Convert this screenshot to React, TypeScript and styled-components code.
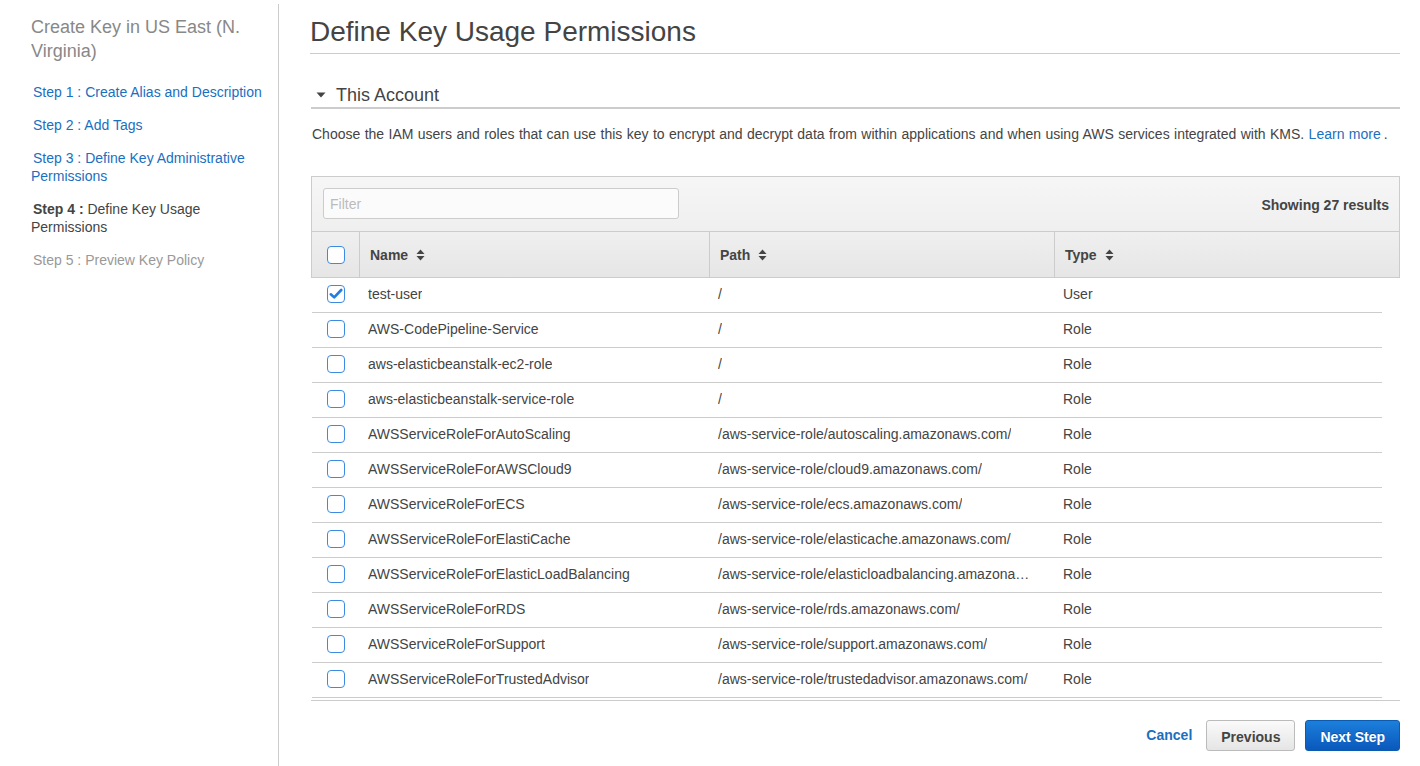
import React, { useState } from 'react';
import styled, { createGlobalStyle } from 'styled-components';

const GlobalStyle = createGlobalStyle`
  html, body {
    margin: 0;
    padding: 0;
    background: #fff;
  }
  body {
    font-family: "Liberation Sans", Arial, Helvetica, sans-serif;
    color: #444;
    font-size: 14px;
  }
  * {
    box-sizing: border-box;
  }
`;

const Page = styled.div`
  display: flex;
  min-height: 100vh;
`;

const Sidebar = styled.nav`
  width: 279px;
  flex-shrink: 0;
  margin-top: 4px;
  padding: 11px 10px 0 31px;
  border-right: 1px solid #ccc;
`;

const SideTitle = styled.h2`
  margin: 0 0 20px;
  font-size: 18px;
  line-height: 24px;
  font-weight: normal;
  color: #888;
`;

const StepList = styled.ul`
  list-style: none;
  margin: 0;
  padding: 0;
  display: flex;
  flex-direction: column;
  gap: 15px;
`;

const StepItem = styled.li<{ $state: 'done' | 'current' | 'todo' }>`
  font-size: 14px;
  line-height: 18px;
  text-indent: 2px;
  color: ${(p) => (p.$state === 'done' ? '#1a6fc0' : p.$state === 'current' ? '#444' : '#999')};
  cursor: ${(p) => (p.$state === 'done' ? 'pointer' : 'default')};

  b {
    font-weight: bold;
  }
`;

const Main = styled.main`
  flex: 1;
  padding: 16px 20px 0 31px;
  min-width: 0;
`;

const Title = styled.h1`
  margin: 0;
  padding-bottom: 5px;
  font-size: 28px;
  line-height: 32px;
  font-weight: normal;
  color: #444;
  border-bottom: 1px solid #ccc;
`;

const SectionHeader = styled.div`
  margin: 30px 0 0 1px;
  padding: 0 0 1px 5px;
  display: flex;
  align-items: center;
  gap: 10px;
  font-size: 18px;
  line-height: 22px;
  color: #444;
  border-bottom: 2px solid #ccc;
  cursor: pointer;
`;

const Description = styled.p`
  margin: 16px 0 0 2px;
  font-size: 14px;
  line-height: 18px;
  word-spacing: 0.5px;
  color: #444;
`;

const Link = styled.a`
  color: #1a6fc0;
  text-decoration: none;
  cursor: pointer;
`;

const Period = styled.span`
  margin-left: 3px;
`;

const Table = styled.div`
  margin: 33px 0 0 1px;
  border-bottom: 1px solid #ccc;
`;

const Toolbar = styled.div`
  height: 55px;
  display: flex;
  align-items: flex-start;
  justify-content: space-between;
  padding: 11px 10px 0 11px;
  border: 1px solid #ccc;
  border-bottom: none;
  background: linear-gradient(#f6f6f6, #efefef);
`;

const FilterInput = styled.input`
  width: 356px;
  height: 31px;
  padding: 0 6px;
  border: 1px solid #ccc;
  border-radius: 3px;
  background: #fbfbfb;
  font-family: inherit;
  font-size: 14px;
  color: #444;
  outline: none;

  &::placeholder {
    color: #bbb;
  }
`;

const ResultCount = styled.span`
  margin-top: 9px;
  font-weight: bold;
  font-size: 14px;
  color: #444;
`;

const COLUMNS = '47px 350px 345px 1fr';

const HeaderRow = styled.div`
  display: grid;
  grid-template-columns: ${COLUMNS};
  height: 47px;
  border: 1px solid #ccc;
  background: linear-gradient(#efefef, #e6e6e6);
`;

const HeaderCell = styled.div<{ $first?: boolean }>`
  display: flex;
  align-items: center;
  gap: 8px;
  padding-left: ${(p) => (p.$first ? '15px' : '10px')};
  border-left: ${(p) => (p.$first ? 'none' : '1px solid #ccc')};
  font-weight: bold;
  font-size: 14px;
  color: #444;
  cursor: ${(p) => (p.$first ? 'default' : 'pointer')};
`;

const Body = styled.div`
  height: 422px;
  overflow: hidden;
  padding-left: 1px;
  padding-right: 18px;
`;

const Row = styled.div`
  display: grid;
  grid-template-columns: ${COLUMNS};
  height: 35px;
  border-bottom: 1px solid #ccc;
  align-items: center;
  font-size: 14px;
  color: #444;
`;

const Cell = styled.div<{ $first?: boolean }>`
  padding-left: ${(p) => (p.$first ? '15px' : '9px')};
  padding-right: ${(p) => (p.$first ? '0' : '20px')};
  display: flex;
  align-items: center;
  white-space: nowrap;
  overflow: hidden;
  min-width: 0;
  padding-bottom: 2px;
`;

const CellText = styled.span`
  overflow: hidden;
  text-overflow: ellipsis;
  white-space: nowrap;
`;

const Box = styled.span`
  width: 18px;
  height: 18px;
  border: 1px solid #3b8be0;
  border-radius: 4px;
  background: #fff;
  display: inline-flex;
  align-items: center;
  justify-content: center;
  cursor: pointer;
  flex-shrink: 0;
`;

const Footer = styled.div`
  display: flex;
  justify-content: flex-end;
  align-items: center;
  margin-top: 19px;
  gap: 10px;
`;

const CancelLink = styled.a`
  font-weight: bold;
  font-size: 14px;
  color: #1a6fc0;
  margin-right: 4px;
  margin-top: -2px;
  cursor: pointer;
`;

const Button = styled.button<{ $primary?: boolean }>`
  height: 31px;
  padding: 2px 14px 0;
  border-radius: 3px;
  font-family: inherit;
  font-weight: bold;
  font-size: 14px;
  cursor: pointer;
  border: 1px solid ${(p) => (p.$primary ? '#0b5cb0' : '#bbb')};
  color: ${(p) => (p.$primary ? '#fff' : '#444')};
  text-shadow: ${(p) => (p.$primary ? '0 -1px 0 rgba(0,0,0,0.25)' : 'none')};
  background: ${(p) =>
    p.$primary ? 'linear-gradient(#1c7fdc, #0a58bb)' : 'linear-gradient(#fafafa, #e5e5e5)'};
`;

const SortIcon = () => (
  <svg width="9" height="12" viewBox="0 0 9 12">
    <path d="M0.5 5 L4.5 0.5 L8.5 5 Z" fill="#444" />
    <path d="M0.5 7 L4.5 11.5 L8.5 7 Z" fill="#444" />
  </svg>
);

const Caret = () => (
  <svg width="10" height="6" viewBox="0 0 10 6">
    <path d="M0.5 0.5 L9.5 0.5 L5 5.5 Z" fill="#444" />
  </svg>
);

const Checkbox: React.FC<{ checked: boolean; onToggle: () => void }> = ({ checked, onToggle }) => (
  <Box onClick={onToggle}>
    {checked && (
      <svg width="14" height="12" viewBox="0 0 14 12">
        <path d="M1.8 6.3 L5.2 9.4 L12.2 2" fill="none" stroke="#1f7ee0" strokeWidth="2.6" strokeLinecap="round" strokeLinejoin="round" />
      </svg>
    )}
  </Box>
);

const rows = [
  { name: 'test-user', path: '/', type: 'User' },
  { name: 'AWS-CodePipeline-Service', path: '/', type: 'Role' },
  { name: 'aws-elasticbeanstalk-ec2-role', path: '/', type: 'Role' },
  { name: 'aws-elasticbeanstalk-service-role', path: '/', type: 'Role' },
  { name: 'AWSServiceRoleForAutoScaling', path: '/aws-service-role/autoscaling.amazonaws.com/', type: 'Role' },
  { name: 'AWSServiceRoleForAWSCloud9', path: '/aws-service-role/cloud9.amazonaws.com/', type: 'Role' },
  { name: 'AWSServiceRoleForECS', path: '/aws-service-role/ecs.amazonaws.com/', type: 'Role' },
  { name: 'AWSServiceRoleForElastiCache', path: '/aws-service-role/elasticache.amazonaws.com/', type: 'Role' },
  { name: 'AWSServiceRoleForElasticLoadBalancing', path: '/aws-service-role/elasticloadbalancing.amazonaws.com/', type: 'Role' },
  { name: 'AWSServiceRoleForRDS', path: '/aws-service-role/rds.amazonaws.com/', type: 'Role' },
  { name: 'AWSServiceRoleForSupport', path: '/aws-service-role/support.amazonaws.com/', type: 'Role' },
  { name: 'AWSServiceRoleForTrustedAdvisor', path: '/aws-service-role/trustedadvisor.amazonaws.com/', type: 'Role' },
];

const App: React.FC = () => {
  const [selected, setSelected] = useState<Record<string, boolean>>({ 'test-user': true });
  const [filter, setFilter] = useState('');

  const toggle = (name: string) => setSelected((prev) => ({ ...prev, [name]: !prev[name] }));
  const allChecked = rows.every((r) => selected[r.name]);
  const toggleAll = () => {
    const next: Record<string, boolean> = {};
    rows.forEach((r) => (next[r.name] = !allChecked));
    setSelected(next);
  };

  return (
    <>
      <GlobalStyle />
      <Page>
        <Sidebar>
          <SideTitle>Create Key in US East (N. Virginia)</SideTitle>
          <StepList>
            <StepItem $state="done">Step 1 : Create Alias and Description</StepItem>
            <StepItem $state="done">Step 2 : Add Tags</StepItem>
            <StepItem $state="done">Step 3 : Define Key Administrative Permissions</StepItem>
            <StepItem $state="current">
              <b>Step 4 :</b> Define Key Usage Permissions
            </StepItem>
            <StepItem $state="todo">Step 5 : Preview Key Policy</StepItem>
          </StepList>
        </Sidebar>

        <Main>
          <Title>Define Key Usage Permissions</Title>

          <SectionHeader>
            <Caret />
            This Account
          </SectionHeader>

          <Description>
            Choose the IAM users and roles that can use this key to encrypt and decrypt data from within
            applications and when using AWS services integrated with KMS. <Link>Learn more</Link>
            <Period>.</Period>
          </Description>

          <Table>
            <Toolbar>
              <FilterInput placeholder="Filter" value={filter} onChange={(e) => setFilter(e.target.value)} />
              <ResultCount>Showing 27 results</ResultCount>
            </Toolbar>
            <HeaderRow>
              <HeaderCell $first>
                <Checkbox checked={allChecked} onToggle={toggleAll} />
              </HeaderCell>
              <HeaderCell>
                Name <SortIcon />
              </HeaderCell>
              <HeaderCell>
                Path <SortIcon />
              </HeaderCell>
              <HeaderCell>
                Type <SortIcon />
              </HeaderCell>
            </HeaderRow>
            <Body>
              {rows
                .filter((r) => r.name.toLowerCase().includes(filter.toLowerCase()))
                .map((r) => (
                  <Row key={r.name}>
                    <Cell $first>
                      <Checkbox checked={!!selected[r.name]} onToggle={() => toggle(r.name)} />
                    </Cell>
                    <Cell>
                      <CellText>{r.name}</CellText>
                    </Cell>
                    <Cell>
                      <CellText>{r.path}</CellText>
                    </Cell>
                    <Cell>
                      <CellText>{r.type}</CellText>
                    </Cell>
                  </Row>
                ))}
            </Body>
          </Table>

          <Footer>
            <CancelLink>Cancel</CancelLink>
            <Button>Previous</Button>
            <Button $primary>Next Step</Button>
          </Footer>
        </Main>
      </Page>
    </>
  );
};

export default App;
